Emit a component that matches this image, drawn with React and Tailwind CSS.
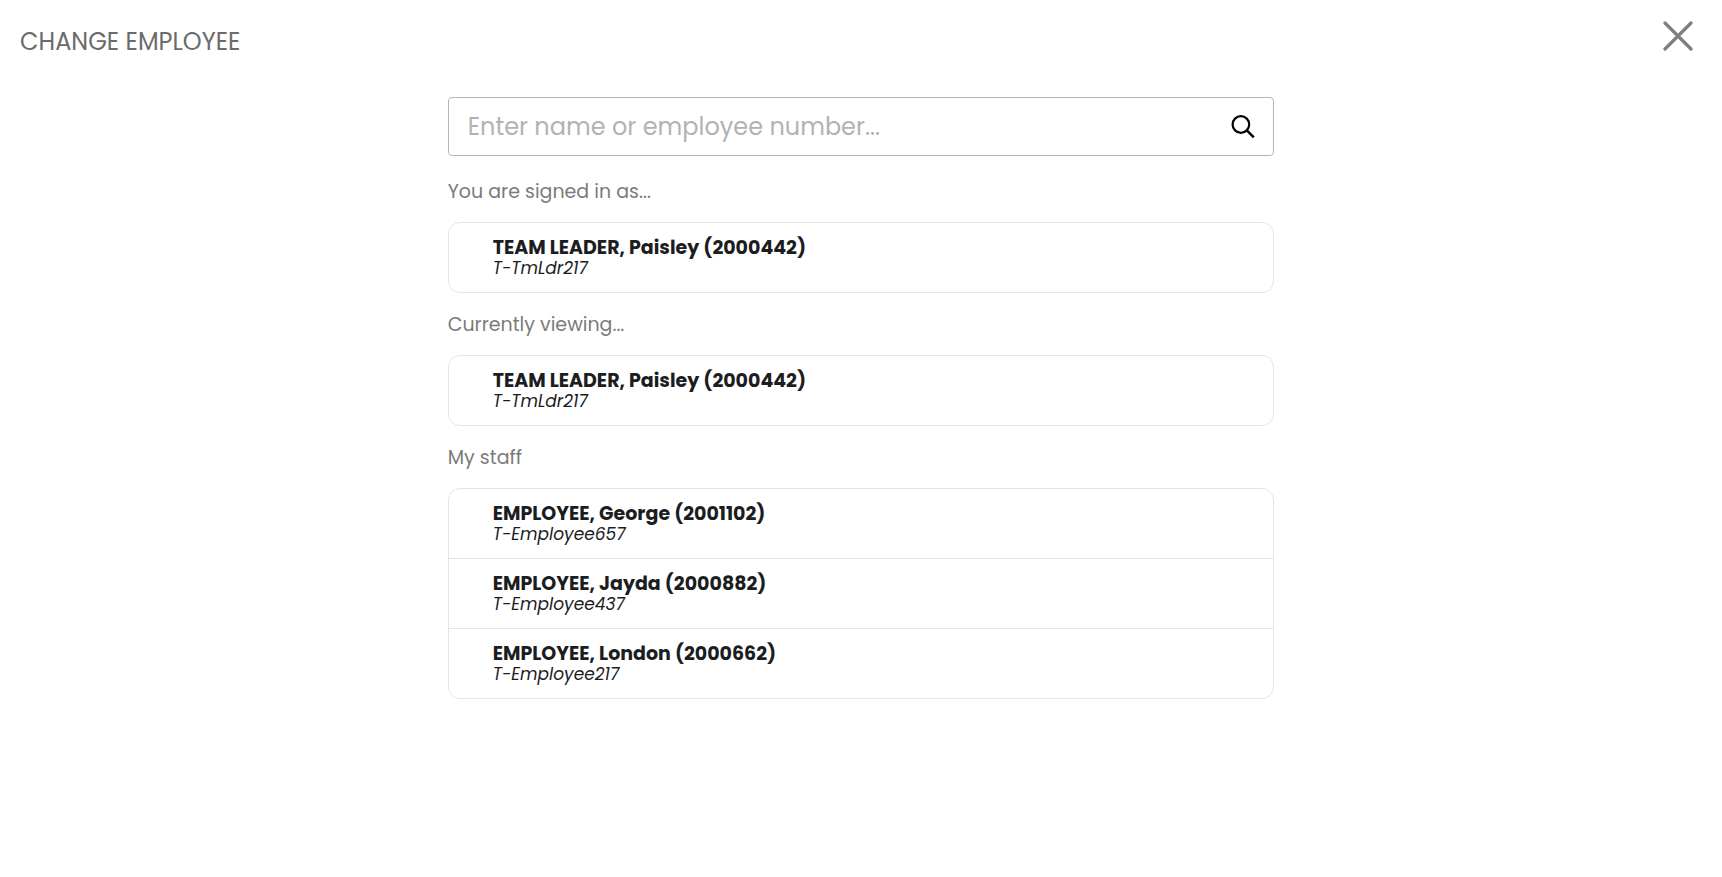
import React, { useState } from 'react';

const sections = [
  {
    title: 'You are signed in as...',
    people: [{ name: 'TEAM LEADER, Paisley (2000442)', login: 'T-TmLdr217' }],
  },
  {
    title: 'Currently viewing...',
    people: [{ name: 'TEAM LEADER, Paisley (2000442)', login: 'T-TmLdr217' }],
  },
  {
    title: 'My staff',
    people: [
      { name: 'EMPLOYEE, George (2001102)', login: 'T-Employee657' },
      { name: 'EMPLOYEE, Jayda (2000882)', login: 'T-Employee437' },
      { name: 'EMPLOYEE, London (2000662)', login: 'T-Employee217' },
    ],
  },
];

function CloseIcon() {
  return (
    <svg viewBox="0 0 30 30" className="size-[30px]" fill="none" stroke="currentColor" strokeWidth="3.2" strokeLinecap="round" aria-hidden="true">
      <path d="M2 2 28 28M28 2 2 28" />
    </svg>
  );
}

function SearchIcon() {
  return (
    <svg viewBox="0 0 24 24" className="size-6" fill="none" stroke="currentColor" strokeWidth="2.2" aria-hidden="true">
      <circle cx="9.9" cy="9.5" r="8.3" />
      <path d="M15.8 15.4 22.8 22.4" strokeWidth="2.5" />
    </svg>
  );
}

function Section({ title, people }) {
  return (
    <section>
      <h2 className="flex h-[62px] items-center pb-1 pt-1.5 text-[19px] text-[#7b7b7b]">{title}</h2>
      <ul className="divide-y divide-[#e5e5e5] overflow-hidden rounded-xl border border-[#e5e5e5]">
        {people.map((person) => (
          <li key={person.login}>
            <button type="button" className="block w-full pb-[14px] pl-11 pr-4 pt-[15px] text-left text-[#1b1d1f]">
              <span className="block text-[19px]/[20px] font-bold">{person.name}</span>
              <span className="block text-[17px]/[20px] italic">{person.login}</span>
            </button>
          </li>
        ))}
      </ul>
    </section>
  );
}

export default function App() {
  const [query, setQuery] = useState('');
  return (
    <div className="min-h-screen bg-white pb-10 font-[Poppins,Inter,sans-serif]">
      <header className="flex items-start justify-between pl-5 pr-[29px] pt-[21px]">
        <h1 className="pt-[5px] text-2xl/[32px] text-[#6b6b6b]">CHANGE EMPLOYEE</h1>
        <button type="button" aria-label="Close" className="text-[#7f7f7f]">
          <CloseIcon />
        </button>
      </header>
      <main className="mx-auto mt-[39px] w-[48%]">
        <form
          role="search"
          onSubmit={(event) => event.preventDefault()}
          className="mb-1 flex h-[59px] items-center rounded border border-[#b3b7b9] pl-[19px] pr-[18px]"
        >
          <input
            type="text"
            aria-label="Employee name or number"
            placeholder="Enter name or employee number..."
            value={query}
            onChange={(event) => setQuery(event.target.value)}
            className="min-w-0 flex-1 bg-transparent text-2xl/[36px] text-[#1b1d1f] outline-none placeholder:text-[#b0b3b6]"
          />
          <button type="submit" aria-label="Search" className="text-black">
            <SearchIcon />
          </button>
        </form>
        {sections.map((section) => (
          <Section key={section.title} {...section} />
        ))}
      </main>
    </div>
  );
}
